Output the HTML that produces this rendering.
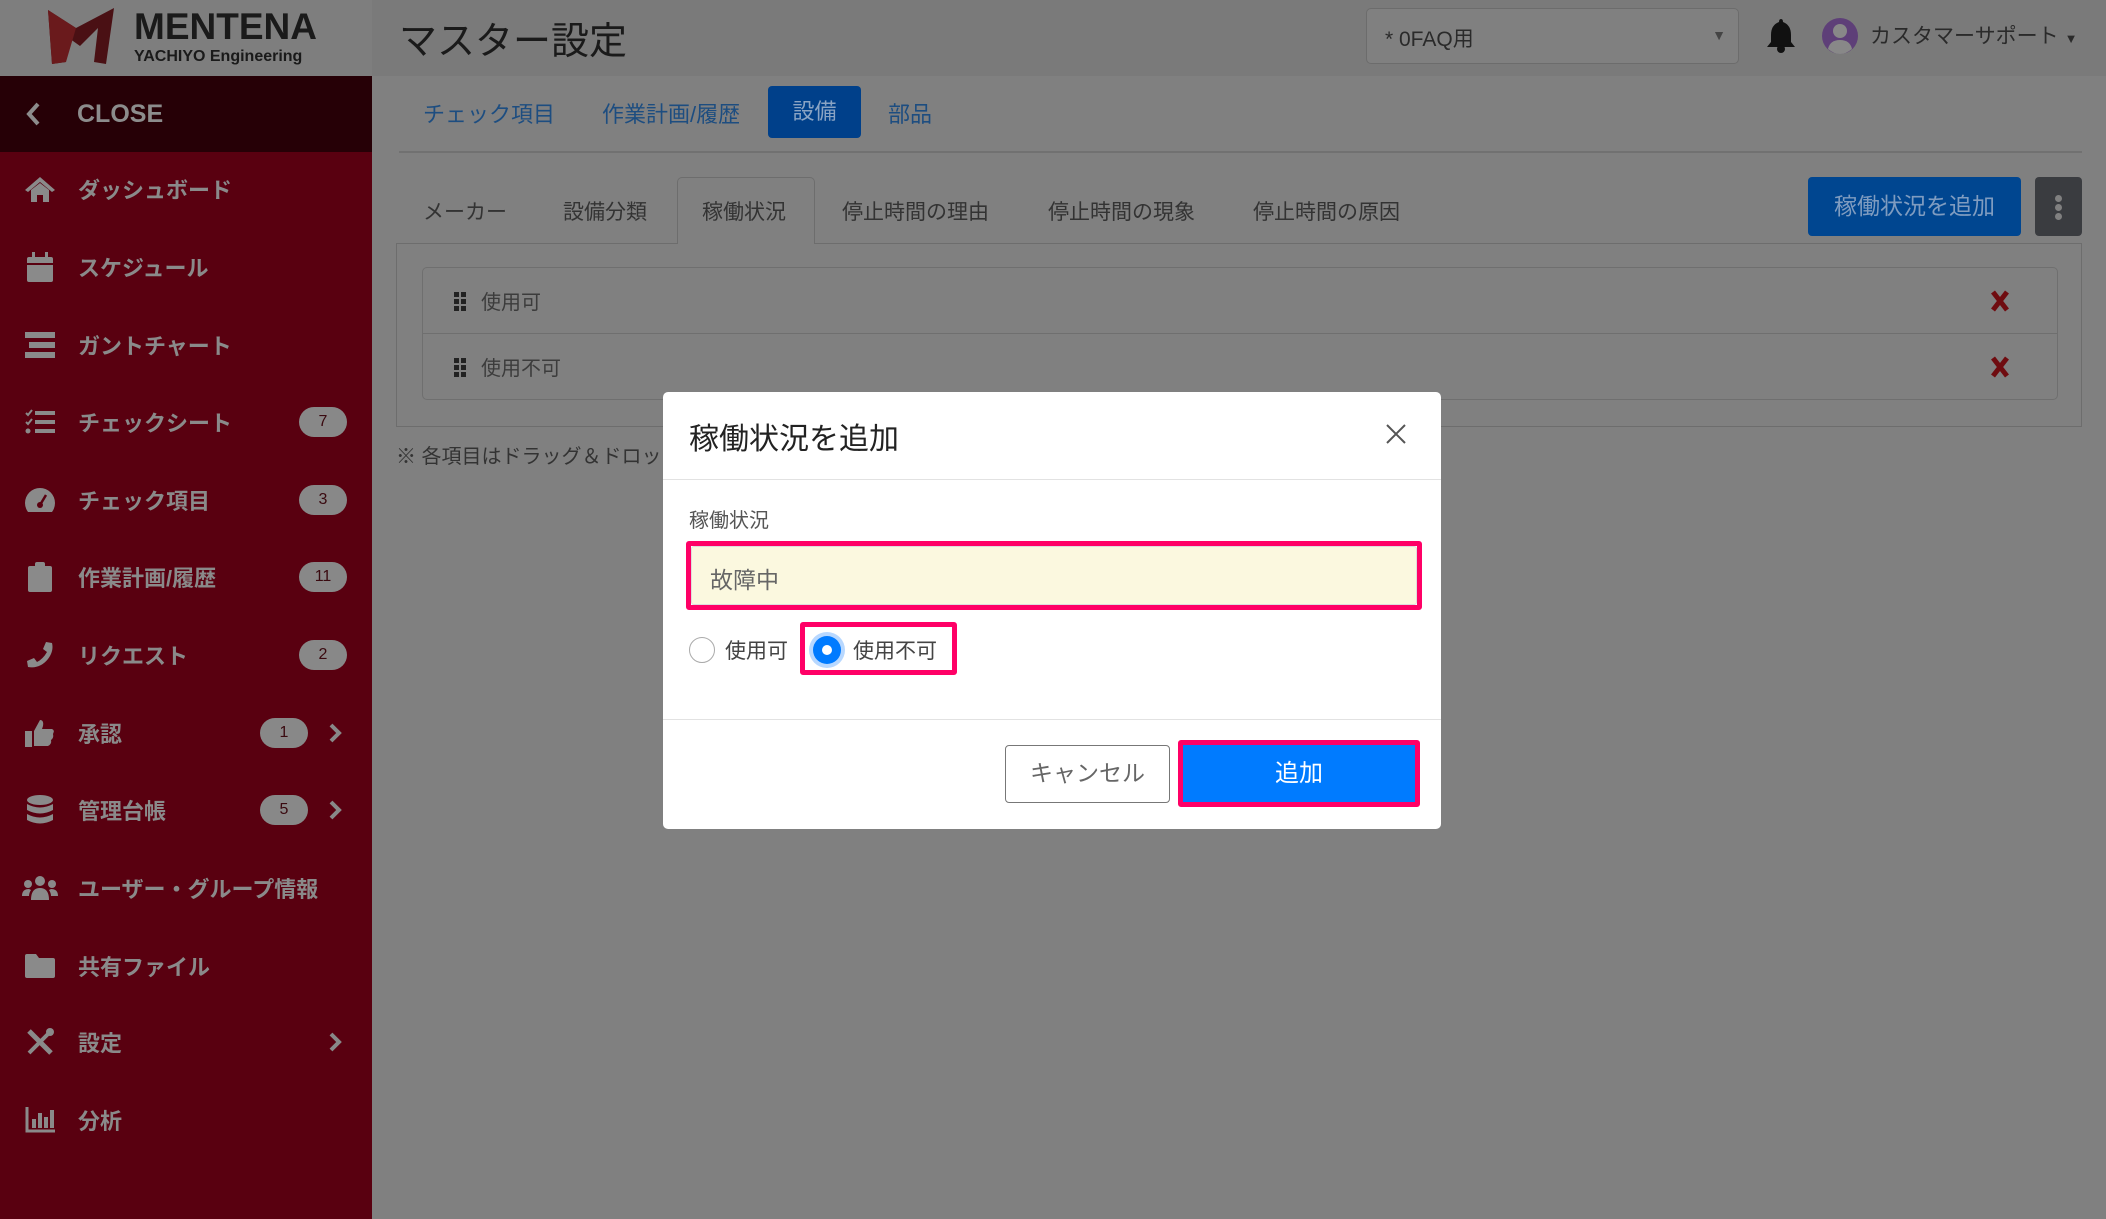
<!DOCTYPE html>
<html><head><meta charset="utf-8"><style>
*{box-sizing:border-box;margin:0;padding:0}
body{width:2106px;height:1219px;overflow:hidden;background:#808080;font-family:"Liberation Sans","Noto Sans CJK JP",sans-serif;position:relative}
.a{position:absolute}
.sb{left:0;top:0;width:372px;height:1219px;background:#590010}
.logo{left:0;top:0;width:372px;height:76px;background:#7e7e7e}
.close{left:0;top:76px;width:372px;height:76px;background:#260006;color:#8c8c8c;font-size:25px;font-weight:bold}
.mi{left:0;width:372px;height:60px;color:#8a8a8a;font-size:22px;font-weight:bold;display:flex;align-items:center}
.mi .ic{width:36px;height:30px;margin-left:22px;margin-right:20px;display:flex;align-items:center;justify-content:center}
.badge{position:absolute;background:#888;color:#3a0a10;font-size:16px;border-radius:15px;width:48px;height:30px;text-align:center;line-height:30px;font-weight:normal}
.chev{position:absolute;left:328px;top:20px}
.hdr{left:372px;top:0;width:1734px;height:76px;background:#7a7a7a}
.tab{font-size:22px;color:#1d4d80}
.st{font-size:21px;color:#333}
.row{left:422px;width:1636px;height:67px;border:1px solid #6f6f6f;color:#3c3c3c;font-size:20px;display:flex;align-items:center}
.dh{margin-left:30px;width:14px;height:20px}
</style></head><body>
<div class="a sb"></div>
<div class="a logo">
 <svg class="a" style="left:46px;top:6px" width="70" height="60" viewBox="0 0 70 60"><polygon points="2,4 30,22 68,2 60,58 48,56 52,22 34,40 20,30 20,56 6,58" fill="#4a1014"/><polygon points="2,4 30,22 20,56 6,58" fill="#6a1a1c"/></svg>
 <div class="a" style="left:134px;top:6px;font-size:37px;font-weight:bold;color:#1a1a1a">MENTENA</div>
 <div class="a" style="left:134px;top:48px;font-size:16px;font-weight:bold;color:#1a1a1a">YACHIYO Engineering</div>
</div>
<div class="a close"><svg class="a" style="left:26px;top:26px" width="14" height="24" viewBox="0 0 14 24"><path d="M12 2 L3 12 L12 22" stroke="#8c8c8c" stroke-width="4" fill="none"/></svg><span class="a" style="left:77px;top:24px">CLOSE</span></div>

<div class="a mi" style="top:159px"><span class="ic"><svg width="32" height="28" viewBox="0 0 32 28"><path d="M16 2 L1 15 L4 17 L16 7 L28 17 L31 15Z M7 15 V27 H13 V20 H19 V27 H25 V15 L16 8Z" fill="#8a8a8a"/></svg></span>ダッシュボード</div>
<div class="a mi" style="top:237px"><span class="ic"><svg width="26" height="30" viewBox="0 0 26 30"><rect x="0" y="5" width="26" height="25" rx="2" fill="#8a8a8a"/><rect x="5" y="0" width="3" height="7" fill="#8a8a8a"/><rect x="18" y="0" width="3" height="7" fill="#8a8a8a"/><rect x="0" y="11" width="26" height="2" fill="#590010"/></svg></span>スケジュール</div>
<div class="a mi" style="top:315px"><span class="ic"><svg width="30" height="26" viewBox="0 0 30 26"><rect y="0" width="30" height="6" fill="#8a8a8a"/><rect x="4" y="10" width="26" height="6" fill="#8a8a8a"/><rect y="20" width="30" height="6" fill="#8a8a8a"/></svg></span>ガントチャート</div>
<div class="a mi" style="top:392px"><span class="ic"><svg width="30" height="26" viewBox="0 0 30 26"><rect x="10" y="2" width="20" height="4" fill="#8a8a8a"/><rect x="10" y="11" width="20" height="4" fill="#8a8a8a"/><rect x="10" y="20" width="20" height="4" fill="#8a8a8a"/><path d="M1 4l2 2 4-5M1 13l2 2 4-5" stroke="#8a8a8a" stroke-width="2" fill="none"/><circle cx="3" cy="22" r="2.5" fill="#8a8a8a"/></svg></span>チェックシート<span class="badge" style="left:299px">7</span></div>
<div class="a mi" style="top:470px"><span class="ic"><svg width="32" height="28" viewBox="0 0 32 28"><path d="M16 2A15 15 0 0 0 1 17 15 15 0 0 0 4 26H28A15 15 0 0 0 31 17 15 15 0 0 0 16 2Z" fill="#8a8a8a"/><circle cx="16" cy="19" r="3" fill="#590010"/><path d="M16 19 L22 9" stroke="#590010" stroke-width="2.5"/></svg></span>チェック項目<span class="badge" style="left:299px">3</span></div>
<div class="a mi" style="top:547px"><span class="ic"><svg width="24" height="30" viewBox="0 0 24 30"><rect x="0" y="4" width="24" height="26" rx="2" fill="#8a8a8a"/><rect x="7" y="0" width="10" height="7" rx="2" fill="#8a8a8a"/></svg></span>作業計画/履歴<span class="badge" style="left:299px">11</span></div>
<div class="a mi" style="top:625px"><span class="ic"><svg width="28" height="28" viewBox="0 0 28 28"><path d="M26 2 L20 1 L17 8 L21 11 Q17 18 11 21 L8 17 L1 20 L2 26 Q14 28 22 18 Q28 10 26 2Z" fill="#8a8a8a"/></svg></span>リクエスト<span class="badge" style="left:299px">2</span></div>
<div class="a mi" style="top:703px"><span class="ic"><svg width="30" height="30" viewBox="0 0 30 30"><rect x="0" y="13" width="7" height="16" fill="#8a8a8a"/><path d="M9 13 L15 2 Q19 2 18 8 L17 11 H27 Q30 12 28 16 Q29 20 26 22 Q27 26 23 28 H9Z" fill="#8a8a8a"/></svg></span>承認<span class="badge" style="left:260px">1</span><svg class="chev" width="14" height="20" viewBox="0 0 14 20"><path d="M3 2 L11 10 L3 18" stroke="#888" stroke-width="4" fill="none"/></svg></div>
<div class="a mi" style="top:780px"><span class="ic"><svg width="28" height="30" viewBox="0 0 28 30"><ellipse cx="14" cy="5" rx="13" ry="5" fill="#8a8a8a"/><path d="M1 9 Q14 16 27 9 V15 Q14 22 1 15Z M1 19 Q14 26 27 19 V25 Q14 32 1 25Z" fill="#8a8a8a"/></svg></span>管理台帳<span class="badge" style="left:260px">5</span><svg class="chev" width="14" height="20" viewBox="0 0 14 20"><path d="M3 2 L11 10 L3 18" stroke="#888" stroke-width="4" fill="none"/></svg></div>
<div class="a mi" style="top:858px"><span class="ic"><svg width="36" height="26" viewBox="0 0 36 26"><circle cx="18" cy="6" r="5" fill="#8a8a8a"/><circle cx="6" cy="9" r="4" fill="#8a8a8a"/><circle cx="30" cy="9" r="4" fill="#8a8a8a"/><path d="M9 25 Q9 13 18 13 Q27 13 27 25Z M0 21 Q0 14 7 14 L9 15 Q7 18 7 21Z M36 21 Q36 14 29 14 L27 15 Q29 18 29 21Z" fill="#8a8a8a"/></svg></span>ユーザー・グループ情報</div>
<div class="a mi" style="top:936px"><span class="ic"><svg width="30" height="24" viewBox="0 0 30 24"><path d="M0 2 Q0 0 2 0 H11 L14 4 H28 Q30 4 30 6 V22 Q30 24 28 24 H2 Q0 24 0 22Z" fill="#8a8a8a"/></svg></span>共有ファイル</div>
<div class="a mi" style="top:1012px"><span class="ic"><svg width="30" height="30" viewBox="0 0 30 30"><path d="M4 4 L26 26" stroke="#8a8a8a" stroke-width="5"/><path d="M26 4 L4 26" stroke="#8a8a8a" stroke-width="4"/><circle cx="25" cy="5" r="4" fill="#8a8a8a"/></svg></span>設定<svg class="chev" width="14" height="20" viewBox="0 0 14 20"><path d="M3 2 L11 10 L3 18" stroke="#888" stroke-width="4" fill="none"/></svg></div>
<div class="a mi" style="top:1090px"><span class="ic"><svg width="30" height="26" viewBox="0 0 30 26"><path d="M2 0 V24 H30" stroke="#8a8a8a" stroke-width="3" fill="none"/><rect x="7" y="12" width="4" height="9" fill="#8a8a8a"/><rect x="13" y="6" width="4" height="15" fill="#8a8a8a"/><rect x="19" y="10" width="4" height="11" fill="#8a8a8a"/><rect x="25" y="3" width="4" height="18" fill="#8a8a8a"/></svg></span>分析</div>

<div class="a hdr"></div>
<div class="a" style="left:399px;top:10px;font-size:38px;color:#1a1a1a">マスター設定</div>
<div class="a" style="left:1366px;top:8px;width:373px;height:56px;border:1px solid #6c6c6c;border-radius:5px;background:#808080;font-size:21px;color:#2a2a2a;padding:14px 0 0 18px">* 0FAQ用<span class="a" style="right:12px;top:18px;font-size:14px;color:#444">&#9660;</span></div>
<svg class="a" style="left:1767px;top:17px" width="28" height="36" viewBox="0 0 28 36"><path d="M14 2 Q16 2 16 5 Q24 8 24 18 V25 L28 30 H0 L4 25 V18 Q4 8 12 5 Q12 2 14 2Z" fill="#111"/><circle cx="14" cy="32" r="4" fill="#111"/></svg>
<svg class="a" style="left:1821px;top:16px" width="38" height="40" viewBox="0 0 38 40"><circle cx="19" cy="20" r="18" fill="#5e3f78"/><circle cx="19" cy="15" r="7" fill="#888"/><path d="M7 33 Q9 24 19 24 Q29 24 31 33 Q25 38 19 38 Q13 38 7 33Z" fill="#888"/></svg>
<div class="a" style="left:1870px;top:20px;font-size:21px;color:#2a2a2a">カスタマーサポート<span style="font-size:13px;margin-left:6px">&#9660;</span></div>

<div class="a tab" style="left:423px;top:97px">チェック項目</div>
<div class="a tab" style="left:602px;top:97px">作業計画/履歴</div>
<div class="a" style="left:768px;top:86px;width:93px;height:52px;background:#00408a;border-radius:4px;color:#8aa4c4;font-size:22px;text-align:center;line-height:52px">設備</div>
<div class="a tab" style="left:888px;top:97px">部品</div>
<div class="a" style="left:399px;top:151px;width:1683px;height:2px;background:#717171"></div>

<div class="a" style="left:677px;top:177px;width:138px;height:67px;border:1px solid #6d6d6d;border-bottom:none;background:#808080;border-radius:5px 5px 0 0"></div>
<div class="a" style="left:396px;top:243px;width:1686px;height:184px;border:1px solid #6d6d6d"></div>
<div class="a" style="left:678px;top:242px;width:136px;height:3px;background:#808080"></div>
<div class="a st" style="left:423px;top:196px">メーカー</div>
<div class="a st" style="left:563px;top:196px">設備分類</div>
<div class="a st" style="left:702px;top:196px">稼働状況</div>
<div class="a st" style="left:842px;top:196px">停止時間の理由</div>
<div class="a st" style="left:1048px;top:196px">停止時間の現象</div>
<div class="a st" style="left:1253px;top:196px">停止時間の原因</div>
<div class="a" style="left:1808px;top:177px;width:213px;height:59px;background:#004690;border-radius:4px;color:#7f9cc0;font-size:23px;text-align:center;line-height:59px">稼働状況を追加</div>
<div class="a" style="left:2035px;top:177px;width:47px;height:59px;background:#3a3c40;border-radius:4px"><div class="a" style="left:20px;top:18px;width:7px;height:7px;border-radius:50%;background:#808080"></div><div class="a" style="left:20px;top:27px;width:7px;height:7px;border-radius:50%;background:#808080"></div><div class="a" style="left:20px;top:36px;width:7px;height:7px;border-radius:50%;background:#808080"></div></div>

<div class="a row" style="top:267px;border-radius:5px 5px 0 0"><svg class="dh" viewBox="0 0 14 20"><rect x="1" y="1" width="5" height="5" fill="#222"/><rect x="8" y="1" width="5" height="5" fill="#222"/><rect x="1" y="8" width="5" height="5" fill="#222"/><rect x="8" y="8" width="5" height="5" fill="#222"/><rect x="1" y="15" width="5" height="5" fill="#222"/><rect x="8" y="15" width="5" height="5" fill="#222"/></svg><span style="margin-left:14px">使用可</span><svg class="a" style="right:47px;top:22px" width="20" height="22" viewBox="0 0 20 22"><path d="M3 2 L17 20 M17 2 L3 20" stroke="#6f0c10" stroke-width="5"/></svg></div>
<div class="a row" style="top:333px;border-radius:0 0 5px 5px"><svg class="dh" viewBox="0 0 14 20"><rect x="1" y="1" width="5" height="5" fill="#222"/><rect x="8" y="1" width="5" height="5" fill="#222"/><rect x="1" y="8" width="5" height="5" fill="#222"/><rect x="8" y="8" width="5" height="5" fill="#222"/><rect x="1" y="15" width="5" height="5" fill="#222"/><rect x="8" y="15" width="5" height="5" fill="#222"/></svg><span style="margin-left:14px">使用不可</span><svg class="a" style="right:47px;top:22px" width="20" height="22" viewBox="0 0 20 22"><path d="M3 2 L17 20 M17 2 L3 20" stroke="#6f0c10" stroke-width="5"/></svg></div>
<div class="a" style="left:396px;top:440px;font-size:20px;color:#333">※ 各項目はドラッグ＆ドロップで並び替えできます</div>

<div class="a" style="left:663px;top:392px;width:778px;height:437px;background:#fff;border-radius:5px;overflow:hidden">
 <div class="a" style="left:26px;top:22px;font-size:30px;color:#222">稼働状況を追加</div>
 <svg class="a" style="left:722px;top:31px" width="22" height="22" viewBox="0 0 22 22"><path d="M2 2L20 20M20 2L2 20" stroke="#555" stroke-width="2"/></svg>
 <div class="a" style="left:0;top:87px;width:778px;height:1px;background:#e2e2e2"></div>
 <div class="a" style="left:26px;top:112px;font-size:20px;color:#555">稼働状況</div>
 <div class="a" style="left:23px;top:149px;width:736px;height:69px;border:5px solid #ff0066;border-radius:3px"></div>
 <div class="a" style="left:28px;top:154px;width:726px;height:59px;background:#fbf8df;border:1px solid #ddd;border-radius:3px;font-size:23px;color:#666;padding:14px 0 0 18px">故障中</div>
 <div class="a" style="left:26px;top:245px;width:26px;height:26px;border:1.5px solid #aaa;border-radius:50%"></div>
 <div class="a" style="left:62px;top:243px;font-size:21px;color:#444">使用可</div>
 <div class="a" style="left:137px;top:230px;width:157px;height:53px;border:5px solid #ff0066;border-radius:3px"></div>
 <div class="a" style="left:150px;top:244px;width:28px;height:28px;border-radius:50%;background:#007bff;box-shadow:0 0 0 4px #b8d8ff"><div class="a" style="left:9px;top:9px;width:10px;height:10px;border-radius:50%;background:#fff"></div></div>
 <div class="a" style="left:190px;top:243px;font-size:21px;color:#444">使用不可</div>
 <div class="a" style="left:0;top:327px;width:778px;height:1px;background:#e2e2e2"></div>
 <div class="a" style="left:342px;top:353px;width:165px;height:58px;border:1.5px solid #777;border-radius:4px;font-size:23px;color:#666;text-align:center;line-height:55px">キャンセル</div>
 <div class="a" style="left:515px;top:348px;width:242px;height:67px;border:5px solid #ff0066;border-radius:3px;background:#007bff;color:#fff;font-size:24px;text-align:center;line-height:57px">追加</div>
</div>
</body></html>
